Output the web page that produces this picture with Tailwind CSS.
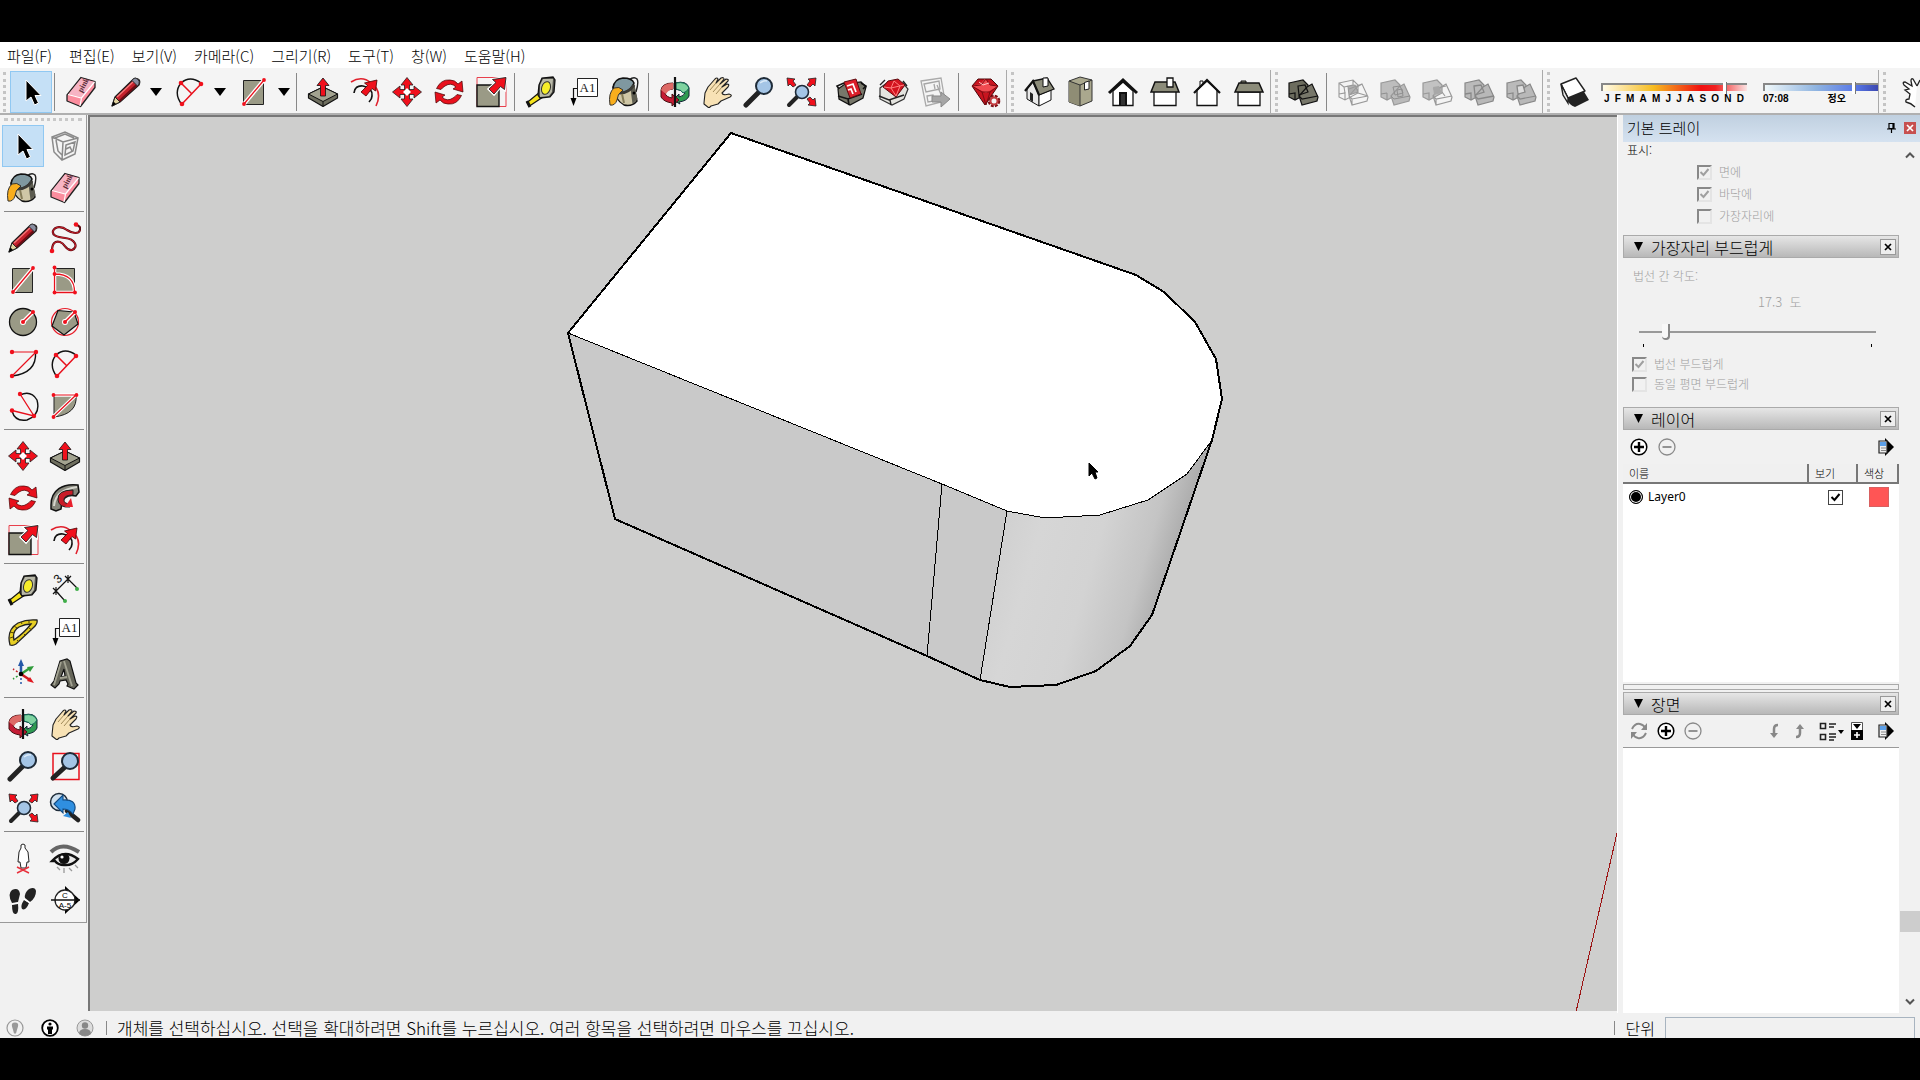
<!DOCTYPE html>
<html lang="ko">
<head>
  <meta charset="UTF-8">
  <meta name="viewport" content="width=device-width, initial-scale=1">
  <title>SketchUp</title>
  <script src="https://cdn.jsdelivr.net/npm/@tailwindcss/browser@4"></script>
</head>
<body class="h-screen flex flex-col overflow-hidden bg-black py-[42px] font-['Noto_Sans_CJK_KR',sans-serif] font-light text-black">

  <!-- Icons -->
  <svg class="hidden">
    <symbol id="i-select" viewBox="0 0 32 32"><path d="M11 4v21l5-4 3.500 8 4-2-3.500-7.500H26z" fill="#000" stroke="#fff" stroke-width="1"/></symbol>
    <symbol id="i-eraser" viewBox="0 0 32 32">
      <path d="M16 1.500 30 5.500v6L15.500 30.500 2 25v-6z" fill="#fb8d9e" stroke="#222" stroke-width="1.300" stroke-linejoin="round"/>
      <path d="M16 2.500 29 6 17 21.500 3.500 18z" fill="#f7b4c4"/>
      <path d="M3 18.500 16.500 22 29.500 6M16.500 22 15 30" fill="none" stroke="#fff" stroke-width="1.200"/>
      <text x="0" y="0" transform="translate(17 17) rotate(-62)" font-size="8" font-family="Liberation Serif" font-weight="bold" fill="#5a2c38">pink</text>
    </symbol>
    <symbol id="i-pencil" viewBox="0 0 32 32">
      <path d="M2 30 5 21 23 3.500Q25 1.500 28 3t1 6L10 26z" fill="#c4202c" stroke="#1a1a1a" stroke-width="1.200" stroke-linejoin="round"/>
      <path d="M7 21 23.500 5.500" stroke="#f47a7a" stroke-width="1.300"/><path d="M9.500 25 27 8.500" stroke="#6d0c14" stroke-width="2"/>
      <path d="M2 30 5 21l5 5z" fill="#e2d3a0" stroke="#222"/><path d="m2 30 1.500-4.500L6 28z"/>
      <path d="m22 4.500 5.500 5.500 1.500-2q1-3-1.500-5T23 3z" fill="#888da0" stroke="#333"/>
    </symbol>
    <symbol id="i-arc" viewBox="0 0 32 32">
      <path d="M8 29Q-1 17 7 7q9-8 20 0" fill="none" stroke="#111" stroke-width="1.400"/>
      <path d="M8 28 27 8M7 7l11 11" fill="none" stroke="#e8101c" stroke-width="1.500"/>
      <g fill="#f0101c"><circle cx="8" cy="28" r="2.300"/><circle cx="27" cy="8" r="2.300"/><circle cx="7" cy="7" r="2.300"/></g>
    </symbol>
    <symbol id="i-rect" viewBox="0 0 32 32">
      <path d="M5.500 4.500h20v24h-20z" fill="#9a9a86" stroke="#222"/>
      <path d="M6 28 26 4" stroke="#fff" stroke-width="4"/><path d="M6 28 26 4" stroke="#e8101c" stroke-width="1.300"/>
      <g fill="#f0101c"><circle cx="6" cy="28" r="1.900"/><circle cx="26" cy="4" r="1.900"/></g>
    </symbol>
    <symbol id="i-rrect" viewBox="0 0 32 32">
      <path d="M5.500 4.500h20v24h-20z" fill="#9a9a86" stroke="#222"/>
      <path d="M5.500 3v25.500h20Q26 10 5.500 10" fill="none" stroke="#fff" stroke-width="3.500"/>
      <path d="M5.500 3v25.500h20Q26 10 5.500 10" fill="none" stroke="#e8101c" stroke-width="1.300"/>
      <g fill="#f0101c"><circle cx="5.500" cy="3.500" r="1.900"/><circle cx="5.500" cy="10" r="1.900"/><circle cx="5.500" cy="28.500" r="1.900"/><circle cx="26" cy="28.500" r="1.900"/></g>
    </symbol>
    <symbol id="i-circle" viewBox="0 0 32 32">
      <circle cx="16" cy="16" r="13.500" fill="#9a9a86" stroke="#111" stroke-width="1.300"/>
      <path d="m16 16 9.500-9.500" stroke="#fff" stroke-width="4"/><circle cx="16" cy="16" r="3" fill="#fff"/><path d="m16 16 9.500-9.500" stroke="#e8101c" stroke-width="1.400"/>
      <g fill="#f0101c"><circle cx="16" cy="16" r="2"/><circle cx="26" cy="6" r="2"/></g>
    </symbol>
    <symbol id="i-polygon" viewBox="0 0 32 32">
      <circle cx="16" cy="16" r="13.500" fill="none" stroke="#e8202c" stroke-width="1.200"/>
      <path d="m9 4.500 16 1.500 4 12L15 29 3 20z" fill="#9a9a86" stroke="#111" stroke-width="1.200"/>
      <path d="m16 16 9.500-9.500" stroke="#fff" stroke-width="4"/><circle cx="16" cy="16" r="3" fill="#fff"/><path d="m16 16 9.500-9.500" stroke="#e8101c" stroke-width="1.400"/>
      <g fill="#f0101c"><circle cx="16" cy="16" r="2"/><circle cx="26" cy="6" r="2"/></g>
    </symbol>
    <symbol id="i-freehand" viewBox="0 0 32 32">
      <path d="M3 29Q3 18 11 20c6 2 5 9 12 8 7-3 3-11-7-12C7 15 3 13 4 9c2-5 9-5 14-1 6 4 12 4 13 0q1-4-4-5" fill="none" stroke="#5b0a10" stroke-width="2.200"/>
      <path d="M3 29Q3 18 11 20c6 2 5 9 12 8 7-3 3-11-7-12C7 15 3 13 4 9c2-5 9-5 14-1 6 4 12 4 13 0" fill="none" stroke="#d3202c" stroke-width="1"/>
      <g fill="#f0101c"><circle cx="3" cy="29" r="2.300"/><circle cx="27" cy="2.500" r="2.300"/></g>
    </symbol>
    <symbol id="i-arc2" viewBox="0 0 32 32">
      <path d="M28.500 4Q30 25 5 28" fill="none" stroke="#111" stroke-width="1.400"/>
      <path d="M5 4h24L5 28" fill="none" stroke="#e8101c" stroke-width="1.200"/>
      <g fill="#f0101c"><circle cx="5" cy="4" r="2.200"/><circle cx="29" cy="4" r="2.200"/><circle cx="5" cy="28" r="2.200"/></g>
    </symbol>
    <symbol id="i-arc3" viewBox="0 0 32 32">
      <path d="M13 5Q24 0 30 10q4 15-10 20Q8 32 5 21" fill="none" stroke="#111" stroke-width="1.400"/>
      <path d="m13 4 14 22L5 20.500" fill="none" stroke="#e8101c" stroke-width="1.300"/>
      <g fill="#f0101c"><circle cx="13" cy="4" r="2.200"/><circle cx="27" cy="26" r="2.200"/><circle cx="5" cy="20.500" r="2.200"/></g>
    </symbol>
    <symbol id="i-pie" viewBox="0 0 32 32">
      <path d="M5 5h22Q29 24 5 27z" fill="#9a9a86" stroke="#222"/>
      <path d="M4 5h23L4 27" fill="none" stroke="#fff" stroke-width="3.500"/><path d="M4 5h23L4 27" fill="none" stroke="#e8101c" stroke-width="1.200"/>
      <g fill="#f0101c"><circle cx="4.500" cy="5" r="1.900"/><circle cx="27.500" cy="5" r="1.900"/><circle cx="4.500" cy="27" r="1.900"/></g>
    </symbol>
    <symbol id="i-push" viewBox="0 0 32 32">
      <path d="M1.500 18 16 11l14.500 7v4L16 30.500 1.500 22z" fill="#6f6f5f" stroke="#111" stroke-width="1.200" stroke-linejoin="round"/>
      <path d="M1.500 18 16 11l14.500 7L16 25.500z" fill="#a3a390" stroke="#111"/><path d="M16 25.500v5" stroke="#111"/>
      <path d="M16 2 22 9.500h-3.500V20h-5V9.500H10z" fill="#f0101c" stroke="#111" stroke-width=".8"/>
    </symbol>
    <symbol id="i-offset" viewBox="0 0 32 32">
      <path d="M2 6Q13-1 22 7q12 8 5 23" fill="none" stroke="#e0202c" stroke-width="1.600"/>
      <path d="M5 17q1-8 9-7 10 2 9 10 0 3-3 6" fill="none" stroke="#111" stroke-width="1.700"/>
      <path d="m28 4-1.500 11-3.500-2.500-6 7.500-5-4 6.500-6.500-3-2.500z" fill="#f0101c" stroke="#400" stroke-width=".8"/>
    </symbol>
    <symbol id="i-move" viewBox="0 0 32 32">
      <path d="m16 1.500 6 7.500h-3.500v5h-5V9H10zM16 30.500l6-7.500h-3.500v-5h-5v5H10zM1.500 16 9 10v3.500h5v5H9V22zM30.500 16 23 10v3.500h-5v5h5V22z" fill="#f0101c" stroke="#222" stroke-width=".8"/>
      <path d="m16 12 4 4-4 4-4-4z" fill="#fff"/>
    </symbol>
    <symbol id="i-rotate" viewBox="0 0 32 32">
      <g fill="#e8101c" stroke="#400" stroke-width=".7" stroke-linejoin="round">
        <path d="M3.500 12.500Q8 3 17 4q5 0 8 4l4-3 1 11-10-3 3-2q-5-5-11-1-3 2-4 3.500z"/>
        <path d="M28.500 19.500Q24 29 15 28q-5 0-8-4l-4 3-1-11 10 3-3 2q5 5 11 1 3-2 4-3.500z"/>
      </g>
    </symbol>
    <symbol id="i-scale" viewBox="0 0 32 32">
      <path d="M2 1.500h29v29H2z" fill="none" stroke="#e8404c"/><path d="M2 9h22v21.500H2z" fill="#9a9a86" stroke="#111" stroke-width="1.400"/>
      <path d="m31 1.500-1.500 12-4-3-6.500 7.500-5-5L21 6.500l-3.500-3z" fill="#f0101c" stroke="#fff" stroke-width="3"/>
      <path d="m31 1.500-1.500 12-4-3-6.500 7.500-5-5L21 6.500l-3.500-3z" fill="#f0101c" stroke="#222" stroke-width=".9"/>
    </symbol>
    <symbol id="i-follow" viewBox="0 0 32 32">
      <path d="M2 23C2 8 14 1 29 3l1 7-3 4Q13 11 12 27l-5 2-5-2z" fill="#85857a" stroke="#111" stroke-width="1.500"/>
      <path d="M5 24Q6 8 28 5" fill="none" stroke="#d6d6ce" stroke-width="2"/>
      <path d="M24 8Q8 8 9 18q1 8 12 7l1-3q-8 0-7-5 1-4 9-4z" fill="#c81c28" stroke="#222"/><path d="m22 16 2 9h-8z" fill="#e8202c"/>
    </symbol>
    <symbol id="i-tape" viewBox="0 0 32 32">
      <path d="m15 16-11 9-2 1 2 4 2-1L18 21z" fill="#f5e31c" stroke="#111" stroke-width="1.200"/><path d="m2 25 3 6" stroke="#111" stroke-width="3"/>
      <path d="M14 9 17 2l11-1 2 3-1 12-4 5-10 1-2-3z" fill="#50504c" stroke="#111" stroke-width="1.300"/>
      <path d="M15 9 18 3h10l-1 13-3 4-9 1z" fill="#b9b9a8"/>
      <ellipse cx="21" cy="12" rx="4.300" ry="6.500" transform="rotate(18 21 12)" fill="#f7ee2a" stroke="#333"/>
    </symbol>
    <symbol id="i-text" viewBox="0 0 32 32">
      <path d="M10.500 2.500h20v18h-20z" fill="#fff" stroke="#222"/><path d="M10 12.500H6.500v10" fill="none" stroke="#111" stroke-width="1.200"/><path d="m6.500 30-3-8h6z"/>
      <text x="20.500" y="16" text-anchor="middle" font-size="13" font-family="Liberation Serif" fill="#222">A1</text>
    </symbol>
    <symbol id="i-paint" viewBox="0 0 32 32">
      <path d="M20 4q5-4 8-1 2 3-1 13" fill="none" stroke="#222" stroke-width="1.400"/>
      <path d="M4 11Q6 24 15 29q8 2 13-4L24 7z" fill="#cfc7a6" stroke="#111" stroke-width="1.400"/>
      <path d="m21 9 4-2 3.500 16-5 5z" fill="#5c5c50"/>
      <path d="M4 12Q5 3 14 2q9 0 11 5-2 6-9 9-9 1-12-4z" fill="#7f98a0" stroke="#111" stroke-width="1.500"/>
      <path d="M9 17q10 1 16-8" fill="none" stroke="#3b3b36" stroke-width="3"/><path d="m13 18 2 9" stroke="#857c58" stroke-width="2"/>
      <circle cx="25" cy="17" r="1.500"/>
      <path d="M1 29Q-1 17 5 12q5-2 9 2-6 4-6 10-2 6-7 5z" fill="#f9ae1c" stroke="#333"/>
    </symbol>
    <symbol id="i-dim" viewBox="0 0 32 32">
      <path d="m7 17 12-12M7 17l9 10M19 5l9 9M4 14l6 6m0-6-6 6m3-7v8M16 2l6 6m0-6-6 6m3-7v8" fill="none" stroke="#111" stroke-width="1.200"/>
      <circle cx="16" cy="27" r="2" fill="#3fae49"/><circle cx="28" cy="15" r="2" fill="#3fae49"/>
      <text transform="translate(9 10) rotate(-42)" font-size="12" font-family="Liberation Sans" fill="#111">3</text>
    </symbol>
    <symbol id="i-protractor" viewBox="0 0 32 32">
      <path fill-rule="evenodd" d="M3 29Q-1 14 11 7 20 3 30 4q1 4-4 8L9 28q-3 2-6 1zm4-5Q5 15 12 11q6-3 12-3-7 9-17 16z" fill="#e6ce23" stroke="#222" stroke-width="1.300"/>
      <path d="m3 22 3-1m-3-5 4 1m0-7 3 2m4-6 1 2m7-3v2M10 24l2 2m5-8 2 2m3-8 3 2" stroke="#554400"/>
    </symbol>
    <symbol id="i-axes" viewBox="0 0 32 32">
      <path d="M14 16v12" stroke="#2458a8" stroke-width="1.500" stroke-dasharray="2 2"/><path d="m14 16-8-5" stroke="#c02028" stroke-width="1.500" stroke-dasharray="2 2"/><path d="m14 16-8 5" stroke="#2f9b3a" stroke-width="1.500" stroke-dasharray="2 2"/>
      <path d="M14 16V5" stroke="#2458a8" stroke-width="2.500"/><path d="m14 16 9-6" stroke="#2f9b3a" stroke-width="2.500"/><path d="m14 16 9 6" stroke="#d01820" stroke-width="2.500"/>
      <path d="m14 1-3 7h6z" fill="#2458a8"/><path d="m27 8-7 1 3 5z" fill="#2f9b3a"/><path d="m27 25-7-2 3-4z" fill="#e01820"/><circle cx="14" cy="16" r="2.300"/>
    </symbol>
    <symbol id="i-3dtext" viewBox="0 0 32 32">
      <path fill-rule="evenodd" d="M11 3 18 1l3 2 6 22 2 2-4 4-7-3 1-2-2-4-6 1-1 3-4 4-4-3 3-4zm4 8-3 8 4-1z" fill="#66665a" stroke="#111" stroke-width="1.200"/>
      <path d="m15 3 8 25M12 4 5 27m6-7 7-1" fill="none" stroke="#a3a392" stroke-width="1.800"/>
    </symbol>
    <symbol id="i-orbit" viewBox="0 0 32 32">
      <path d="M16 7Q28 4 30 12v8q-2 5-10 6l1 2-7-4 6-6v3q5-1 6-4-3-3-10-4z" fill="#2d9a50" stroke="#123"/><path d="M17 7q10-2 13 5-2 4-6 5-1-3-7-4z" fill="#7fd3a0" stroke="#165"/>
      <path d="M14 7Q3 7 2 14v7q3 5 11 6v3l7-6-7-6v4q-6-1-7-5 2-4 8-4z" fill="#c41c34" stroke="#411"/><path d="M14 7Q4 7 2 14l5 4q2-4 7-5z" fill="#dd6a66"/>
      <path d="M16 1v30" stroke="#111" stroke-width="2.200"/>
    </symbol>
    <symbol id="i-pan" viewBox="0 0 32 32">
      <path d="M3 27 4 17 7 11 14 3q2-2 3 0l-2 4 5-5q3-1 3 1l-4 5 6-5q3 0 2 2l-6 6 5-3q3 0 1 3l-6 6q1 3 7 1 4 1 1 3l-9 4-3 3-7 2-2 2-5-4z" fill="#f8e2b5" stroke="#222" stroke-width="1.100" stroke-linejoin="round"/>
      <path d="m9 14 6-7m-3 9 7-8m-4 10 6-7" stroke="#8a7342" stroke-width=".8"/>
    </symbol>
    <symbol id="i-zoom" viewBox="0 0 32 32">
      <path d="m3 29 12-12" stroke="#222" stroke-width="5" stroke-linecap="round"/><circle cx="21" cy="10" r="8" fill="#a4c5e6" stroke="#1e2b38" stroke-width="2"/><path d="M17 7q4-3 7-2" fill="none" stroke="#dcebf8" stroke-width="1.500"/>
    </symbol>
    <symbol id="i-zoomwin" viewBox="0 0 32 32">
      <path d="M4 3.500h26v26H4z" fill="none" stroke="#e8101c" stroke-width="1.500"/><path d="m4 28 12-11" stroke="#222" stroke-width="5" stroke-linecap="round"/><circle cx="21" cy="11" r="8" fill="#a4c5e6" stroke="#1e2b38" stroke-width="2"/>
    </symbol>
    <symbol id="i-extents" viewBox="0 0 32 32">
      <path d="m4 29 8-8" stroke="#222" stroke-width="4" stroke-linecap="round"/><circle cx="17" cy="16" r="6.500" fill="#a4c5e6" stroke="#1e2b38" stroke-width="1.600"/>
      <path d="m2 2 8 1-2 2 3 4-3 2-3-3-2 2zM31 2l-8 1 2 2-3 4 3 2 3-3 2 2zM31 30l-8-1 2-2-3-4 3-2 3 3 2-2z" fill="#f0101c" stroke="#222" stroke-width=".8"/>
    </symbol>
    <symbol id="i-prev" viewBox="0 0 32 32">
      <circle cx="10" cy="10" r="8.500" fill="#cfe0ee" stroke="#1e2b38" stroke-width="1.500"/><path d="m18 19 11 9" stroke="#222" stroke-width="4.500" stroke-linecap="round"/>
      <path d="m5 12 9-9v5q13-1 12 9l-2 5q-4-5-10-5v4z" fill="#2f8fe0" stroke="#134a80" stroke-width="1.100"/><path d="m14 24 5-4 3 6" fill="#2f8fe0"/>
    </symbol>
    <symbol id="i-person" viewBox="0 0 32 32">
      <path d="M16 2q3 0 2 4l3 4 1 10h-2l-1 6h-5l-1-6h-2l1-10 2-4q-1-4 2-4z" fill="#fff" stroke="#222"/><path d="m10 25 12 6m0-6-12 6" stroke="#e8303c" stroke-width="1.400"/>
    </symbol>
    <symbol id="i-eye" viewBox="0 0 32 32">
      <path d="M2 10Q13-1 30 10" fill="none" stroke="#666" stroke-width="4"/><path d="M3 19Q15 6 29 17q-6 7-14 6-6 0-9-4z" fill="#e9e9e9" stroke="#111" stroke-width="2.400"/>
      <circle cx="15" cy="16.500" r="5.500" fill="#111"/><circle cx="13" cy="15" r="1.600" fill="#fff"/><path d="m8 25 3 3m4-2v5m5-5 3 3m3-6 3 3" stroke="#999" stroke-width="1.300"/>
    </symbol>
    <symbol id="i-walk" viewBox="0 0 32 32">
      <path d="M5 6q7-3 8 4l-2 8-6 1Q0 10 5 6zM5 21l6-1q1 9-2 10-4 1-4-9zM22 5q6-3 7 2 0 7-6 11l-5-4q-1-5 4-9zM17 16l5 3q-3 8-7 6-2-3 2-9z" fill="#222"/>
      <path d="m5 20 6-1M17 15l6 4" stroke="#fff" stroke-width="1.200"/>
    </symbol>
    <symbol id="i-section" viewBox="0 0 32 32">
      <path d="m16 2 15 14-15 14z"/><circle cx="16" cy="16" r="10" fill="#fff" stroke="#222" stroke-width="1.300"/><path d="M2 16h29" stroke="#111" stroke-width="1.500"/>
      <g font-family="Liberation Sans" font-size="8" text-anchor="middle"><text x="16" y="14">C</text><text x="16" y="24">A-5</text></g>
    </symbol>
    <symbol id="i-component" viewBox="0 0 32 32">
      <g fill="none" stroke="#8a8a8a" stroke-width="1.500"><path d="m3 7 13-5 13 6-3 16-13 6-8-8zM3 7l11 5 15-4M14 12l-1 18M7 10l2 11 4 4M17 15l9-3-2 9-8 4zM6 8l10-4 9 4"/><path d="m17 19 4-2 2 4"/></g>
    </symbol>
    <symbol id="i-warehouse" viewBox="0 0 32 32">
      <path d="m3 13 7-5 16-2 5 5-3 11-13 7-11-6z" fill="#77776a" stroke="#111" stroke-width="1.200"/><path d="m4 13-2-3 7-3M26 7l5 3-3 3M3 20l10 3 14-5M13 23l1 6" fill="none" stroke="#111" stroke-width="1.600"/>
      <path d="m9 6 12-3 5 15-11 4z" fill="#dc1f2a" stroke="#5e0c10"/><path d="m12 10 6-2 3 8m-8-2 3-1 2 5" fill="none" stroke="#fff" stroke-width="1.700"/>
    </symbol>
    <symbol id="i-extwarehouse" viewBox="0 0 32 32">
      <path d="m3 12 8-6 15 1 5 6-4 10-12 6-12-6z" fill="#e4e4df" stroke="#333" stroke-width="1.200"/><path d="m2 20 10 4 15-5M13 24l1 5M8 4 3 9M26 5l4 5" fill="none" stroke="#222" stroke-width="1.400"/>
      <path d="m6 11 5-6 10-2 7 6-9 12z" fill="#d3131f" stroke="#5e0c10"/><path d="m7 11 7 1 13-3M14 12l5 8 4-10-6-5z" fill="none" stroke="#ff8080"/>
    </symbol>
    <symbol id="i-layout" viewBox="0 0 32 32">
      <path d="m2 5 20-3 4 23-19 5z" fill="#f4f4f4" stroke="#aaa" stroke-width="1.300"/><path d="m5 8 15-3 1 8-14 3zm10 0 1 5M8 20l6-1 1 6-6 1zM18 9l5 12" fill="none" stroke="#a5a5a5" stroke-width="1.300"/>
      <path d="M13 20h9v-4l9 7-9 8v-5h-9z" fill="#a6a6a6" stroke="#888"/>
    </symbol>
    <symbol id="i-ruby" viewBox="0 0 32 32">
      <path d="m3 10 6-7h13l7 7-13 19z" fill="#c8141f" stroke="#4a0609"/><path d="m3 10 8-2 5-5 6 6 7 1-12 7z" fill="#f04a50"/><path d="m3 10 10 6 4 13 4-13 8-6-8-1-4-6-5 6zM13 16h8" fill="none" stroke="#7c0b12"/><path d="m10 6 4 3 6-2" fill="none" stroke="#ffc4c4"/>
      <circle cx="25" cy="25" r="4.300" fill="#fff" stroke="#7c0b12" stroke-width="4" stroke-dasharray="2.400 1"/><circle cx="25" cy="25" r="3.500" fill="#f3f3f3" stroke="#c33b3f" stroke-width="2"/>
    </symbol>
    <symbol id="i-iso" viewBox="0 0 32 32">
      <path d="m4 13 6-7 6 13v11L4 23z" fill="#e8e8e8" stroke="#111"/><path d="m16 19 12-5v10l-12 6z" fill="#fff" stroke="#111"/><path d="m7 16 3 2v8l-3-2z" fill="#222"/>
      <path d="m10 5 14-3 7 11-15 6z" fill="#8c8c7a" stroke="#111" stroke-width="1.300"/><path d="m2 15 8-10 6 14" fill="none" stroke="#111" stroke-width="2.200"/><path d="M20 2h5v8l-5 1z" fill="#fff" stroke="#111"/>
    </symbol>
    <symbol id="i-top" viewBox="0 0 32 32">
      <path d="m4 5 11-4 12 3v21l-12 5L4 26z" fill="#aaa88e" stroke="#333"/><path d="M4 5l11 4v21L4 26z" fill="#8f8d75"/><path d="m4 5 11 4 12-5M15 9v21" fill="none" stroke="#333"/><path d="M19.500 6.500 24 5v8l-4.500 1z" fill="#fff" stroke="#222"/>
    </symbol>
    <symbol id="i-front" viewBox="0 0 32 32"><path d="M6 15 16 6l10 9v14.500H6z" fill="#fff" stroke="#111" stroke-width="1.300"/><path d="M12 16h8v13h-8z" fill="#111"/><path d="M14 18h4v11h-4z" fill="#333"/><path d="M2 17 16 4l14 13" fill="none" stroke="#111" stroke-width="3"/></symbol>
    <symbol id="i-right" viewBox="0 0 32 32"><path d="M5 15h22v14.500H5z" fill="#fff" stroke="#111" stroke-width="1.300"/><path d="M6 6h20l4 10H2z" fill="#8c8c7a" stroke="#111" stroke-width="1.500"/><path d="M18 2h6v9h-6z" fill="#fff" stroke="#111" stroke-width="1.300"/></symbol>
    <symbol id="i-back" viewBox="0 0 32 32"><path d="M9 5h3v6H9z" fill="#fff" stroke="#111"/><path d="M6 14 16 5l10 9v15.500H6z" fill="#fff" stroke="#111" stroke-width="1.300"/><path d="M3 17 16 4l13 13" fill="none" stroke="#111" stroke-width="2.200"/></symbol>
    <symbol id="i-left" viewBox="0 0 32 32"><path d="M5 16h22v13.500H5z" fill="#fff" stroke="#111" stroke-width="1.300"/><path d="M8 5h5v3H8z" fill="#8c8c7a" stroke="#111"/><path d="M6 7h20l4 9H2z" fill="#8c8c7a" stroke="#111" stroke-width="1.500"/></symbol>
    <symbol id="i-solid" viewBox="0 0 32 32">
      <path d="m2 7 14-3 5 5v8L8 24l-6-3z" fill="#6c6c5e" stroke="#111" stroke-width="1.200"/><path d="m20 11 5-3 6 13-1 4-15 4-3-9z" fill="#77776a" stroke="#111" stroke-width="1.200"/><path d="m12 20 3 3 16-3M2 18l6-1v7M11 10l7-1 3 7-9 3z" fill="none" stroke="#111" stroke-width="1.200"/>
    </symbol>
    <symbol id="i-intersect" viewBox="0 0 32 32">
      <path d="m11 10 7-1 3 7-9 3z" fill="#b0b0b0"/><path d="m2 7 14-3 5 5v8L8 24l-6-3zM20 11l5-3 6 13-1 4-15 4-3-9zM12 20l3 3 16-3M2 18l6-1v7M11 10l7-1 3 7-9 3zM2 7l5 4 1 6m-1-6 9-2V4m5 13 10 3M15 23v6M12 13l13-5" fill="none" stroke="#999" stroke-width="1.100"/>
    </symbol>
    <symbol id="i-union" viewBox="0 0 32 32">
      <path d="m2 7 14-3 5 5v8L8 24l-6-3z" fill="#bdbdbd" stroke="#999" stroke-width="1.200"/><path d="m20 11 5-3 6 13-1 4-15 4-3-9z" fill="#bababa" stroke="#999" stroke-width="1.200"/><path d="m12 20 3 3 16-3M2 18l6-1v7M14 11l7-1 3 7-8 2zM18 14l5-1 1 7-5 1z" fill="none" stroke="#8f8f8f"/>
    </symbol>
    <symbol id="i-subtract" viewBox="0 0 32 32">
      <path d="m2 7 14-3 5 5v8L8 24l-6-3z" fill="#c2c2c2" stroke="#999" stroke-width="1.200"/><path d="m20 11 5-3 6 13-1 4-15 4-3-9zM12 20l3 3 16-3M15 23v6M21 16l3 4M2 18l6-1v7M12 13l13-3" fill="none" stroke="#999" stroke-width="1.200"/><path d="m12 11 6-1 3 7-8 2z" fill="#a8a8a8"/>
    </symbol>
    <symbol id="i-trim" viewBox="0 0 32 32">
      <path d="m2 7 14-3 5 5v8L8 24l-6-3z" fill="#bababa" stroke="#888" stroke-width="1.200"/><path d="m20 11 5-3 6 13-1 4-15 4-3-9z" fill="#b8b8b8" stroke="#888" stroke-width="1.200"/><path d="m12 20 3 3 16-3M2 18l6-1v7M11 10l7-1 3 7-9 3z" fill="none" stroke="#888" stroke-width="1.300"/>
    </symbol>
    <symbol id="i-split" viewBox="0 0 32 32">
      <path d="m2 7 14-3 5 5v8L8 24l-6-3z" fill="#bababa" stroke="#888" stroke-width="1.200"/><path d="m20 11 5-3 6 13-1 4-15 4-3-9z" fill="#b8b8b8" stroke="#888" stroke-width="1.200"/><path d="m12 20 3 3 16-3M2 18l6-1v7" fill="none" stroke="#888" stroke-width="1.200"/><path d="m12 10 6-1 2 7-7 2z" fill="#ddd" stroke="#888" stroke-width="1.300"/>
    </symbol>
    <symbol id="i-shadow" viewBox="0 0 32 32">
      <path d="m5 19 19-5 6 10-14 7q-6-2-9-9z" fill="#222"/><path d="M2 8 17 2l9 13-17 7z" fill="#fff" stroke="#222" stroke-width="1.400" stroke-linejoin="round"/><path d="m2 8 2 11 5 8v-5z" fill="#eee" stroke="#222" stroke-width="1.400"/>
    </symbol>
    <symbol id="i-hand" viewBox="0 0 32 32"><path d="M22 10 18 3q-2-1-2 2l1 5-7-4q-3 0-1 3l5 4-4 1 5 4-1 5q-4 0-3 3 5 1 9 5M22 10l3-6" fill="#fff" stroke="#222" stroke-width="1.300"/></symbol>
    <symbol id="i-plus" viewBox="0 0 20 20"><circle cx="10" cy="10" r="7.800" fill="#fff" stroke="#000" stroke-width="1.500"/><path d="M5 10h10M10 5v10" stroke="#000" stroke-width="2.400"/></symbol>
    <symbol id="i-minus" viewBox="0 0 20 20"><circle cx="10" cy="10" r="8" fill="none" stroke="#8a8a8a" stroke-width="1.300"/><path d="M5.500 10h9" stroke="#888" stroke-width="1.800"/></symbol>
    <symbol id="i-details" viewBox="0 0 20 20"><path d="m9 1 9 9-9 9z"/><path d="M3 4h8v12H3z" fill="#eee" stroke="#222" stroke-width="1.200"/><path d="M4 5h6v4H4z" fill="#5b9fe8"/><path d="M5 11h5M5 13.500h5" stroke="#888"/></symbol>
    <symbol id="i-check" viewBox="0 0 15 15"><path d="m3.500 7 3 3 5-6" fill="none" stroke="currentColor" stroke-width="2"/></symbol>
    <symbol id="i-x" viewBox="0 0 12 12"><path d="m3 3 6 6m0-6-6 6" stroke="currentColor" stroke-width="1.700"/></symbol>
  </svg>

  <div class="flex-1 min-h-0 flex flex-col bg-[#f1f1f1]">

    <!-- Menu bar -->
    <nav class="h-[26px] shrink-0 bg-white flex items-center gap-[17px] pl-[7px] pt-[2px] text-[15px] leading-6 whitespace-nowrap">
      <a href="#">파일(F)</a>
      <a href="#">편집(E)</a>
      <a href="#">보기(V)</a>
      <a href="#">카메라(C)</a>
      <a href="#">그리기(R)</a>
      <a href="#">도구(T)</a>
      <a href="#">창(W)</a>
      <a href="#">도움말(H)</a>
    </nav>

    <!-- Top toolbar -->
    <div class="h-[47px] shrink-0 flex overflow-hidden pt-[2px] bg-[#f4f4f4] border-b-2 border-[#b0b0b0] [&_button]:shrink-0">
      <div class="flex items-center shrink-0 border-r border-[#aaa]">
        <span class="ml-[3px] mr-1 h-10 border-l-3 border-dotted border-[#c4c4c4]"></span>
        <button aria-label="선택" class="w-[42px] h-[42px] flex items-center justify-center bg-[#c5e0f6] border border-[#90c8f2]"><svg class="size-8"><use href="#i-select"/></svg></button>
        <span class="w-px h-[38px] ml-[2px] mr-[5px] bg-[#888]"></span>
        <button aria-label="지우개" class="w-[42px] flex justify-center"><svg class="size-8"><use href="#i-eraser"/></svg></button>
        <button aria-label="선" class="w-16 flex items-center gap-2 pl-2"><svg class="size-8"><use href="#i-pencil"/></svg><svg class="w-3 h-2" viewBox="0 0 12 8"><path d="M0 0h12L6 8z"/></svg></button>
        <button aria-label="호" class="w-16 flex items-center gap-2 pl-2"><svg class="size-8"><use href="#i-arc"/></svg><svg class="w-3 h-2" viewBox="0 0 12 8"><path d="M0 0h12L6 8z"/></svg></button>
        <button aria-label="직사각형" class="w-16 flex items-center gap-2 pl-2"><svg class="size-8"><use href="#i-rect"/></svg><svg class="w-3 h-2" viewBox="0 0 12 8"><path d="M0 0h12L6 8z"/></svg></button>
        <span class="w-px h-[38px] ml-[2px] mr-[5px] bg-[#888]"></span>
        <button aria-label="밀기/끌기" class="w-[42px] flex justify-center"><svg class="size-8"><use href="#i-push"/></svg></button>
        <button aria-label="오프셋" class="w-[42px] flex justify-center"><svg class="size-8"><use href="#i-offset"/></svg></button>
        <button aria-label="이동" class="w-[42px] flex justify-center"><svg class="size-8"><use href="#i-move"/></svg></button>
        <button aria-label="회전" class="w-[42px] flex justify-center"><svg class="size-8"><use href="#i-rotate"/></svg></button>
        <button aria-label="배율" class="w-[42px] flex justify-center"><svg class="size-8"><use href="#i-scale"/></svg></button>
        <span class="w-px h-[38px] ml-[2px] mr-[5px] bg-[#888]"></span>
        <button aria-label="줄자" class="w-[42px] flex justify-center"><svg class="size-8"><use href="#i-tape"/></svg></button>
        <button aria-label="텍스트" class="w-[42px] flex justify-center"><svg class="size-8"><use href="#i-text"/></svg></button>
        <button aria-label="페인트통" class="w-[42px] flex justify-center"><svg class="size-8"><use href="#i-paint"/></svg></button>
        <span class="w-px h-[38px] ml-[2px] mr-[5px] bg-[#888]"></span>
        <button aria-label="궤도" class="w-[42px] flex justify-center"><svg class="size-8"><use href="#i-orbit"/></svg></button>
        <button aria-label="이동 보기" class="w-[42px] flex justify-center"><svg class="size-8"><use href="#i-pan"/></svg></button>
        <button aria-label="확대/축소" class="w-[42px] flex justify-center"><svg class="size-8"><use href="#i-zoom"/></svg></button>
        <button aria-label="범위 확대" class="w-[42px] flex justify-center"><svg class="size-8"><use href="#i-extents"/></svg></button>
        <span class="w-px h-[38px] ml-[2px] mr-[5px] bg-[#888]"></span>
        <button aria-label="3D Warehouse" class="w-[42px] flex justify-center"><svg class="size-8"><use href="#i-warehouse"/></svg></button>
        <button aria-label="Extension Warehouse" class="w-[42px] flex justify-center"><svg class="size-8"><use href="#i-extwarehouse"/></svg></button>
        <button aria-label="LayOut" disabled class="w-[42px] flex justify-center"><svg class="size-8"><use href="#i-layout"/></svg></button>
        <span class="w-px h-[38px] ml-[2px] mr-[5px] bg-[#888]"></span>
        <button aria-label="확장 관리자" class="w-[42px] flex justify-center"><svg class="size-8"><use href="#i-ruby"/></svg></button>
      </div>
      <div class="flex items-center shrink-0 border-r border-[#aaa]">
        <span class="mx-1 h-10 border-l-3 border-dotted border-[#c4c4c4]"></span>
        <button aria-label="등각" class="w-[42px] flex justify-center"><svg class="size-8"><use href="#i-iso"/></svg></button>
        <button aria-label="평면" class="w-[42px] flex justify-center"><svg class="size-8"><use href="#i-top"/></svg></button>
        <button aria-label="정면" class="w-[42px] flex justify-center"><svg class="size-8"><use href="#i-front"/></svg></button>
        <button aria-label="우측면" class="w-[42px] flex justify-center"><svg class="size-8"><use href="#i-right"/></svg></button>
        <button aria-label="뒷면" class="w-[42px] flex justify-center"><svg class="size-8"><use href="#i-back"/></svg></button>
        <button aria-label="좌측면" class="w-[42px] flex justify-center"><svg class="size-8"><use href="#i-left"/></svg></button>
      </div>
      <div class="flex items-center shrink-0 border-r border-[#aaa]">
        <span class="mx-1 h-10 border-l-3 border-dotted border-[#c4c4c4]"></span>
        <button aria-label="외부 셸" class="w-[42px] flex justify-center"><svg class="size-8"><use href="#i-solid"/></svg></button>
        <span class="w-px h-[38px] ml-[2px] mr-[5px] bg-[#888]"></span>
        <button aria-label="교차" disabled class="w-[42px] flex justify-center"><svg class="size-8"><use href="#i-intersect"/></svg></button>
        <button aria-label="결합" disabled class="w-[42px] flex justify-center"><svg class="size-8"><use href="#i-union"/></svg></button>
        <button aria-label="빼기" disabled class="w-[42px] flex justify-center"><svg class="size-8"><use href="#i-subtract"/></svg></button>
        <button aria-label="자르기" disabled class="w-[42px] flex justify-center"><svg class="size-8"><use href="#i-trim"/></svg></button>
        <button aria-label="분할" disabled class="w-[42px] flex justify-center"><svg class="size-8"><use href="#i-split"/></svg></button>
      </div>
      <div class="flex items-center shrink-0 border-r border-[#aaa]">
        <span class="mx-1 h-10 border-l-3 border-dotted border-[#c4c4c4]"></span>
        <button aria-label="그림자" class="w-[42px] flex justify-center"><svg class="size-8"><use href="#i-shadow"/></svg></button>
        <label class="w-[146px] ml-[5px] pt-1">
          <input type="range" aria-label="날짜" min="0" max="100" value="86" class="block w-full h-2 appearance-none border-t-2 border-l-2 border-[#888] bg-[linear-gradient(90deg,#fffbe8,#f6bc20_35%,#f01010_68%,#f02020_78%,#fbe4e4)] [&::-webkit-slider-thumb]:appearance-none [&::-webkit-slider-thumb]:w-1 [&::-webkit-slider-thumb]:h-3 [&::-webkit-slider-thumb]:bg-white [&::-webkit-slider-thumb]:border-r [&::-webkit-slider-thumb]:border-[#777]">
          <span class="flex justify-between px-[3px] pt-[2px] text-[10px] leading-3 font-['Liberation_Sans',sans-serif] font-bold"><span>J</span><span>F</span><span>M</span><span>A</span><span>M</span><span>J</span><span>J</span><span>A</span><span>S</span><span>O</span><span>N</span><span>D</span></span>
        </label>
        <label class="w-[115px] ml-4 pt-1">
          <input type="range" aria-label="시간" min="0" max="100" value="80" class="block w-full h-2 appearance-none border-t-2 border-l-2 border-[#888] bg-[linear-gradient(90deg,#f0f8fa,#8fb4e0_45%,#5878e8_80%,#3c48b0)] [&::-webkit-slider-thumb]:appearance-none [&::-webkit-slider-thumb]:w-1 [&::-webkit-slider-thumb]:h-3 [&::-webkit-slider-thumb]:bg-white [&::-webkit-slider-thumb]:border-r [&::-webkit-slider-thumb]:border-[#777]">
          <span class="flex justify-between pr-8 pt-[2px] text-[10px] leading-3 font-['Liberation_Sans','Noto_Sans_CJK_KR',sans-serif] font-bold"><span>07:08</span><span>정오</span></span>
        </label>
      </div>
      <div class="flex items-center flex-1">
        <span class="mx-1 h-10 border-l-3 border-dotted border-[#c4c4c4]"></span>
        <button aria-label="상호 작용" class="w-[42px] flex justify-center"><svg class="size-8"><use href="#i-hand"/></svg></button>
      </div>
    </div>

    <div class="flex-1 min-h-0 flex">

      <!-- Left tool palette -->
      <aside class="w-[88px] shrink-0">
        <div class="w-[87px] pt-[3px] pb-px border-r border-b border-[#999] bg-[#f4f4f4]">
          <div class="mx-1 mb-1 border-t-3 border-dotted border-[#c8c8c8]"></div>
          <div class="pl-[2px] flex flex-col">
            <div class="grid grid-cols-2 auto-rows-[42px] [&>button]:flex [&>button]:items-center [&>button]:justify-center">
              <button aria-label="선택" class="bg-[#c5e0f6] border border-[#90c8f2]"><svg class="size-8"><use href="#i-select"/></svg></button>
              <button aria-label="구성요소 만들기"><svg class="size-8"><use href="#i-component"/></svg></button>
              <button aria-label="페인트통"><svg class="size-8"><use href="#i-paint"/></svg></button>
              <button aria-label="지우개"><svg class="size-8"><use href="#i-eraser"/></svg></button>
            </div>
            <hr class="mx-[2px] mt-[2px] mb-[5px] border-[#888]">
            <div class="grid grid-cols-2 auto-rows-[42px] [&>button]:flex [&>button]:items-center [&>button]:justify-center">
              <button aria-label="선"><svg class="size-8"><use href="#i-pencil"/></svg></button>
              <button aria-label="자유형"><svg class="size-8"><use href="#i-freehand"/></svg></button>
              <button aria-label="직사각형"><svg class="size-8"><use href="#i-rect"/></svg></button>
              <button aria-label="회전된 직사각형"><svg class="size-8"><use href="#i-rrect"/></svg></button>
              <button aria-label="원"><svg class="size-8"><use href="#i-circle"/></svg></button>
              <button aria-label="다각형"><svg class="size-8"><use href="#i-polygon"/></svg></button>
              <button aria-label="호"><svg class="size-8"><use href="#i-arc2"/></svg></button>
              <button aria-label="2점 호"><svg class="size-8"><use href="#i-arc"/></svg></button>
              <button aria-label="3점 호"><svg class="size-8"><use href="#i-arc3"/></svg></button>
              <button aria-label="원형"><svg class="size-8"><use href="#i-pie"/></svg></button>
            </div>
            <hr class="mx-[2px] mt-[2px] mb-[5px] border-[#888]">
            <div class="grid grid-cols-2 auto-rows-[42px] [&>button]:flex [&>button]:items-center [&>button]:justify-center">
              <button aria-label="이동"><svg class="size-8"><use href="#i-move"/></svg></button>
              <button aria-label="밀기/끌기"><svg class="size-8"><use href="#i-push"/></svg></button>
              <button aria-label="회전"><svg class="size-8"><use href="#i-rotate"/></svg></button>
              <button aria-label="따라가기"><svg class="size-8"><use href="#i-follow"/></svg></button>
              <button aria-label="배율"><svg class="size-8"><use href="#i-scale"/></svg></button>
              <button aria-label="오프셋"><svg class="size-8"><use href="#i-offset"/></svg></button>
            </div>
            <hr class="mx-[2px] mt-[2px] mb-[5px] border-[#888]">
            <div class="grid grid-cols-2 auto-rows-[42px] [&>button]:flex [&>button]:items-center [&>button]:justify-center">
              <button aria-label="줄자"><svg class="size-8"><use href="#i-tape"/></svg></button>
              <button aria-label="치수"><svg class="size-8"><use href="#i-dim"/></svg></button>
              <button aria-label="각도기"><svg class="size-8"><use href="#i-protractor"/></svg></button>
              <button aria-label="텍스트"><svg class="size-8"><use href="#i-text"/></svg></button>
              <button aria-label="축"><svg class="size-8"><use href="#i-axes"/></svg></button>
              <button aria-label="3D 텍스트"><svg class="size-8"><use href="#i-3dtext"/></svg></button>
            </div>
            <hr class="mx-[2px] mt-[2px] mb-[5px] border-[#888]">
            <div class="grid grid-cols-2 auto-rows-[42px] [&>button]:flex [&>button]:items-center [&>button]:justify-center">
              <button aria-label="궤도"><svg class="size-8"><use href="#i-orbit"/></svg></button>
              <button aria-label="이동 보기"><svg class="size-8"><use href="#i-pan"/></svg></button>
              <button aria-label="확대/축소"><svg class="size-8"><use href="#i-zoom"/></svg></button>
              <button aria-label="창 확대"><svg class="size-8"><use href="#i-zoomwin"/></svg></button>
              <button aria-label="범위 확대"><svg class="size-8"><use href="#i-extents"/></svg></button>
              <button aria-label="이전"><svg class="size-8"><use href="#i-prev"/></svg></button>
            </div>
            <hr class="mx-[2px] mt-[2px] mb-[5px] border-[#888]">
            <div class="grid grid-cols-2 auto-rows-[42px] [&>button]:flex [&>button]:items-center [&>button]:justify-center">
              <button aria-label="카메라 배치"><svg class="size-8"><use href="#i-person"/></svg></button>
              <button aria-label="둘러보기"><svg class="size-8"><use href="#i-eye"/></svg></button>
              <button aria-label="걷기"><svg class="size-8"><use href="#i-walk"/></svg></button>
              <button aria-label="단면"><svg class="size-8"><use href="#i-section"/></svg></button>
            </div>
          </div>
        </div>
      </aside>

      <!-- Model view -->
      <main class="flex-1 min-w-0 mb-[2px] border-l-2 border-t-2 border-[#777] bg-[#cececd]">
        <svg class="block size-full" viewBox="90 117 1527 894" preserveAspectRatio="xMinYMin slice">
          <defs>
            <linearGradient id="curve" gradientUnits="userSpaceOnUse" x1="990" y1="560" x2="1180" y2="615">
              <stop offset="0" stop-color="#d0d0d0"/><stop offset=".2" stop-color="#d6d6d6"/><stop offset=".5" stop-color="#d3d3d3"/><stop offset=".75" stop-color="#c4c4c4"/><stop offset="1" stop-color="#9c9c9c"/>
            </linearGradient>
          </defs>
          <path d="M568 333 942 484 1007 511 980 680 927 656 615 519z" fill="#c9c9c9"/>
          <path d="M1007 511 1045 518 1100 515 1148 500 1187 474 1212 440 1152 615 1130 646 1096 671 1056 685 1010 687 980 680z" fill="url(#curve)"/>
          <path d="M731 133 1136 275 1164 292 1195 322 1216 359 1222 399 1212 440 1187 474 1148 500 1100 515 1045 518 1007 511 942 484 568 333z" fill="#fff"/>
          <g fill="none" stroke="#000" shape-rendering="crispEdges">
            <path d="M568 333 942 484 1007 511 1045 518 1100 515 1148 500 1187 474 1212 440M942 484 927 656M1007 511 980 680"/>
            <path d="M568 333 731 133 1136 275 1164 292 1195 322 1216 359 1222 399 1212 440 1152 615 1130 646 1096 671 1056 685 1010 687 980 680 927 656 615 519z" stroke-width="2" stroke-linejoin="round"/>
          </g>
          <path d="M1617 833 1576 1012" stroke="#9c1414" shape-rendering="crispEdges"/>
          <path d="M1089 463v13l3-3 3 6 2-1-2-6h3z" stroke="#000"/>
        </svg>
      </main>

      <!-- Tray -->
      <aside class="w-[303px] shrink-0 pl-[5px] flex flex-col border-l border-white">
        <header class="h-[27px] shrink-0 flex items-center px-1 pb-px bg-[linear-gradient(#c0d0e0,#d5e2f0)]">
          <h1 class="flex-1 text-[15px] leading-6">기본 트레이</h1>
          <button aria-label="자동 숨기기" class="mr-[7px]"><svg class="w-3 h-3" viewBox="0 0 12 12"><path d="M4 1.500h5v5H4zM2 7h9M6.500 7v4M8 1.500v5" fill="none" stroke="#000" stroke-width="1.200"/></svg></button>
          <button aria-label="닫기" class="size-3 bg-[#c75050] text-white"><svg class="size-3"><use href="#i-x"/></svg></button>
        </header>

        <div class="flex-1 min-h-0 flex">
          <div class="flex-1 min-w-0 flex flex-col text-[12px] leading-4">
            <fieldset disabled class="h-[93px] shrink-0 pl-1 text-[#a0a0a0]">
              <legend class="float-left w-full h-[22px] text-black">표시:</legend>
              <div class="clear-both pl-[70px] flex flex-col gap-[6px]">
                <label class="flex items-center gap-[7px]"><span class="grid size-[15px]"><input type="checkbox" checked class="peer col-start-1 row-start-1 appearance-none border-2 border-t-[#888] border-l-[#888] border-r-[#e4e4e4] border-b-[#e4e4e4]"><svg class="col-start-1 row-start-1 size-[15px] hidden peer-checked:block"><use href="#i-check"/></svg></span>면에</label>
                <label class="flex items-center gap-[7px]"><span class="grid size-[15px]"><input type="checkbox" checked class="peer col-start-1 row-start-1 appearance-none border-2 border-t-[#888] border-l-[#888] border-r-[#e4e4e4] border-b-[#e4e4e4]"><svg class="col-start-1 row-start-1 size-[15px] hidden peer-checked:block"><use href="#i-check"/></svg></span>바닥에</label>
                <label class="flex items-center gap-[7px]"><span class="grid size-[15px]"><input type="checkbox" class="peer col-start-1 row-start-1 appearance-none border-2 border-t-[#888] border-l-[#888] border-r-[#e4e4e4] border-b-[#e4e4e4]"></span>가장자리에</label>
              </div>
            </fieldset>

            <!-- Soften edges -->
            <section class="h-[172px] shrink-0">
              <header class="h-[23px] flex items-center pl-[10px] pr-[2px] border border-[#aaa] bg-[linear-gradient(#e6e6e6,#b8b8b8)]">
                <svg class="w-[9px] h-[9px] mr-2" viewBox="0 0 9 9"><path d="M0 0h9L4.500 9z"/></svg>
                <h2 class="flex-1 text-[16px] leading-5">가장자리 부드럽게</h2>
                <button aria-label="닫기" class="size-4 flex items-center justify-center border border-[#999] bg-[#eee]"><svg class="size-3"><use href="#i-x"/></svg></button>
              </header>
              <fieldset disabled class="pl-[10px] pt-[10px] text-[#a0a0a0]">
                <label for="angle" class="block">법선 간 각도:</label>
                <output for="angle" class="block pt-[10px] pl-[125px] text-[13px] leading-4">17.3 &nbsp;도</output>
                <div class="w-[237px] ml-[6px] pt-[13px]">
                  <input id="angle" type="range" min="0" max="180" value="18" class="block w-full h-[18px] appearance-none bg-[linear-gradient(#999,#999)] bg-[length:100%_2px] bg-center bg-no-repeat [&::-webkit-slider-thumb]:appearance-none [&::-webkit-slider-thumb]:w-2 [&::-webkit-slider-thumb]:h-4 [&::-webkit-slider-thumb]:rounded-b-sm [&::-webkit-slider-thumb]:bg-[#f8f8f8] [&::-webkit-slider-thumb]:border-r-2 [&::-webkit-slider-thumb]:border-b-2 [&::-webkit-slider-thumb]:border-[#888]">
                  <div class="flex justify-between px-1 pt-[3px]"><span class="w-px h-[3px] bg-black"></span><span class="w-px h-[3px] bg-black"></span></div>
                </div>
                <div class="pt-[9px] flex flex-col gap-1 -ml-px">
                  <label class="flex items-center gap-[7px]"><span class="grid size-[15px]"><input type="checkbox" checked class="peer col-start-1 row-start-1 appearance-none border-2 border-t-[#888] border-l-[#888] border-r-[#e4e4e4] border-b-[#e4e4e4]"><svg class="col-start-1 row-start-1 size-[15px] hidden peer-checked:block"><use href="#i-check"/></svg></span>법선 부드럽게</label>
                  <label class="flex items-center gap-[7px]"><span class="grid size-[15px]"><input type="checkbox" class="peer col-start-1 row-start-1 appearance-none border-2 border-t-[#888] border-l-[#888] border-r-[#e4e4e4] border-b-[#e4e4e4]"></span>동일 평면 부드럽게</label>
                </div>
              </fieldset>
            </section>

            <!-- Layers -->
            <section class="h-[275px] shrink-0 flex flex-col">
              <header class="h-[23px] flex items-center pl-[10px] pr-[2px] border border-[#aaa] bg-[linear-gradient(#e6e6e6,#b8b8b8)]">
                <svg class="w-[9px] h-[9px] mr-2" viewBox="0 0 9 9"><path d="M0 0h9L4.500 9z"/></svg>
                <h2 class="flex-1 text-[16px] leading-5">레이어</h2>
                <button aria-label="닫기" class="size-4 flex items-center justify-center border border-[#999] bg-[#eee]"><svg class="size-3"><use href="#i-x"/></svg></button>
              </header>
              <div class="h-[34px] flex items-center gap-2 pl-[6px] pr-[3px]">
                <button aria-label="레이어 추가" class="size-5"><svg class="size-5"><use href="#i-plus"/></svg></button>
                <button aria-label="레이어 삭제" class="size-5"><svg class="size-5"><use href="#i-minus"/></svg></button>
                <button aria-label="세부 정보" class="size-5 ml-auto"><svg class="size-5"><use href="#i-details"/></svg></button>
              </div>
              <div class="flex-1 bg-white">
                <table class="w-full table-fixed border-separate border-spacing-0">
                  <colgroup><col><col class="w-[49px]"><col class="w-[41px]"></colgroup>
                  <thead>
                    <tr class="h-5 text-left text-[11px] bg-[#f0f0f0]">
                      <th class="p-0 pl-[6px] font-light border-r-2 border-b-2 border-[#777]">이름</th>
                      <th class="p-0 pl-[6px] font-light border-r-2 border-b-2 border-[#777]">보기</th>
                      <th class="p-0 pl-[6px] font-light border-r-2 border-b-2 border-[#777]">색상</th>
                    </tr>
                  </thead>
                  <tbody>
                    <tr class="h-[26px]">
                      <td class="p-0 pl-[6px]"><label class="flex items-center gap-[5px] font-['Noto_Sans',sans-serif] font-normal"><input type="radio" checked class="appearance-none size-[14px] rounded-full border border-black bg-black shadow-[inset_0_0_0_1px_#fff]">Layer0</label></td>
                      <td class="p-0 pl-[19px]"><span class="grid size-[15px]"><input type="checkbox" checked aria-label="보기" class="peer col-start-1 row-start-1 appearance-none border border-[#444]"><svg class="col-start-1 row-start-1 size-[15px] hidden peer-checked:block"><use href="#i-check"/></svg></span></td>
                      <td class="p-0 pl-[11px]"><button aria-label="색상" class="block size-5 bg-[#ff5555] border border-[#d86060]"></button></td>
                    </tr>
                  </tbody>
                </table>
              </div>
            </section>

            <div class="h-[6px] my-[2px] shrink-0 border border-[#aaa]"></div>

            <!-- Scenes -->
            <section class="flex-1 min-h-0 flex flex-col">
              <header class="h-[23px] shrink-0 flex items-center pl-[10px] pr-[2px] border border-[#aaa] bg-[linear-gradient(#e6e6e6,#b8b8b8)]">
                <svg class="w-[9px] h-[9px] mr-2" viewBox="0 0 9 9"><path d="M0 0h9L4.500 9z"/></svg>
                <h2 class="flex-1 text-[16px] leading-5">장면</h2>
                <button aria-label="닫기" class="size-4 flex items-center justify-center border border-[#999] bg-[#eee]"><svg class="size-3"><use href="#i-x"/></svg></button>
              </header>
              <div class="h-[33px] shrink-0 flex items-center pl-[6px] pr-[3px] border-b border-[#999]">
                <button aria-label="장면 업데이트" class="size-5"><svg class="size-5" viewBox="0 0 20 20"><path d="M3 8q3-6 8-5 4 1 5 4m1 5q-3 6-8 5-4-1-5-4" fill="none" stroke="#888" stroke-width="2"/><path d="M18 2v7h-6zM2 18v-7h6z" fill="#888"/></svg></button>
                <button aria-label="장면 추가" class="size-5 ml-[7px]"><svg class="size-5"><use href="#i-plus"/></svg></button>
                <button aria-label="장면 제거" class="size-5 ml-[7px]"><svg class="size-5"><use href="#i-minus"/></svg></button>
                <button aria-label="장면 아래로 이동" class="ml-auto mr-3"><svg class="w-3 h-4" viewBox="0 0 12 16"><path d="M9 2Q5 2 5 6v6" fill="none" stroke="#888" stroke-width="2.500"/><path d="M1 10h8l-4 5z" fill="#888"/></svg></button>
                <button aria-label="장면 위로 이동" class="mr-[14px]"><svg class="w-3 h-4" viewBox="0 0 12 16"><path d="M3 14q4 0 4-4V4" fill="none" stroke="#888" stroke-width="2.500"/><path d="M3 6h8L7 1z" fill="#888"/></svg></button>
                <button aria-label="보기 옵션" class="mr-[5px]"><svg class="w-[26px] h-5" viewBox="0 0 26 20"><path d="M1.500 2.500h5v5h-5zM1.500 13.500h5v5h-5z" fill="none" stroke="#222" stroke-width="1.600"/><path d="M10 3h7M10 6h5M10 13h7M10 16h7M10 19h5" stroke="#222" stroke-width="1.500"/><path d="M19 9h6l-3 4z"/></svg></button>
                <button aria-label="세부 정보 숨기기" class="mr-3"><svg class="w-[14px] h-5" viewBox="0 0 14 20"><path d="M1.500 1.500h11v17h-11z" fill="#fff" stroke="#555"/><path d="M3 3h8L7 8zM1 9h12v10H1z"/><path d="M7 11v6M4 14h6" stroke="#fff" stroke-width="1.600"/></svg></button>
                <button aria-label="메뉴" class="size-5"><svg class="size-5"><use href="#i-details"/></svg></button>
              </div>
              <div class="flex-1 bg-white"></div>
            </section>
          </div>

          <!-- Scroll bar -->
          <div class="w-5 shrink-0 ml-px flex flex-col items-center pt-2 pb-[6px]">
            <svg class="w-[10px] h-[10px]" viewBox="0 0 10 10"><path d="m1 7.500 4-4 4 4" fill="none" stroke="#555" stroke-width="2"/></svg>
            <div class="flex-1"></div>
            <div class="w-full h-[21px] mb-[65px] bg-[#cdcdcd]"></div>
            <svg class="w-[10px] h-[10px]" viewBox="0 0 10 10"><path d="m1 2.500 4 4 4-4" fill="none" stroke="#555" stroke-width="2"/></svg>
          </div>
        </div>
      </aside>
    </div>

    <!-- Status bar -->
    <footer class="h-[25px] shrink-0 flex items-center pl-[6px] pr-[5px] pt-[5px] text-[17px] leading-5 overflow-hidden whitespace-nowrap">
      <button aria-label="위치 정보"><svg class="size-[18px]" viewBox="0 0 18 18"><circle cx="9" cy="9" r="8" fill="none" stroke="#999" stroke-width="1.200"/><path d="M9 3.500q4 0 3 4-1 3-2 7H8q-1-4-2-7-1-4 3-4z" fill="#999"/></svg></button>
      <button aria-label="크레딧" class="ml-[17px]"><svg class="size-[18px]" viewBox="0 0 18 18"><circle cx="9" cy="9" r="7.800" fill="#fff" stroke="#000" stroke-width="1.800"/><circle cx="9" cy="5" r="1.600"/><path d="M6 7.500h6v3h-1V15H7v-4.500H6z"/></svg></button>
      <button aria-label="로그인" class="ml-[17px]"><svg class="size-[18px]" viewBox="0 0 18 18"><circle cx="9" cy="9" r="8" fill="#ddd" stroke="#999"/><circle cx="9" cy="6.500" r="3.200" fill="#888"/><path d="M3 15q0-5 6-5t6 5q-6 4-12 0z" fill="#888"/></svg></button>
      <span class="w-px h-[14px] ml-3 mr-[10px] bg-[#888]"></span>
      <p class="flex-1">개체를 선택하십시오. 선택을 확대하려면 Shift를 누르십시오. 여러 항목을 선택하려면 마우스를 끄십시오.</p>
      <span class="w-px h-[14px] mr-[11px] bg-[#888]"></span>
      <label for="vcb" class="text-[16px]">단위</label>
      <input id="vcb" type="text" class="w-[250px] h-[22px] ml-[10px] border border-[#a8b4c0] bg-[#f1f1f1]">
    </footer>
  </div>
</body>
</html>
